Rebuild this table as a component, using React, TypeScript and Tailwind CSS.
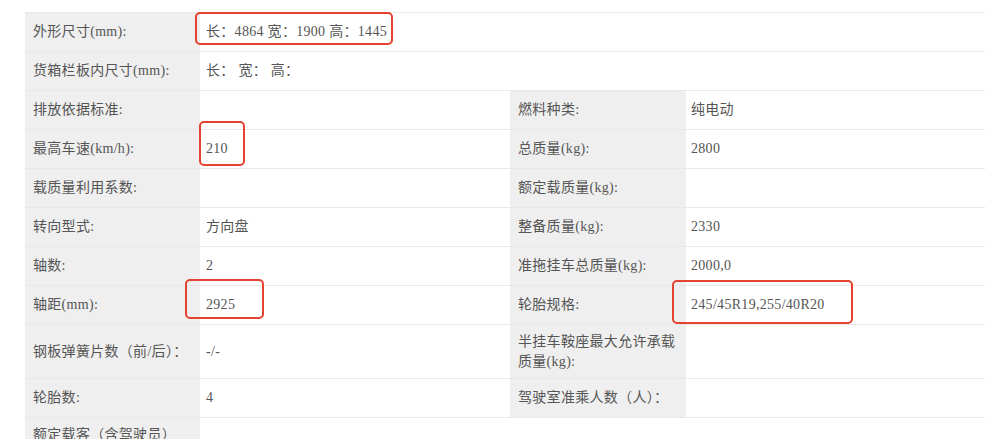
import type { ReactNode } from "react";

type Row = {
  id: string;
  label: ReactNode;
  value?: string;
  label2?: string;
  value2?: string;
  span?: boolean;
  tall?: boolean;
};

const rows: Row[] = [
  { id: "size", label: "外形尺寸(mm):", value: "长：4864 宽：1900 高：1445", span: true },
  { id: "box", label: "货箱栏板内尺寸(mm):", value: "长：  宽：  高：", span: true },
  { id: "emission", label: "排放依据标准:", value: "", label2: "燃料种类:", value2: "纯电动" },
  { id: "speed", label: "最高车速(km/h):", value: "210", label2: "总质量(kg):", value2: "2800" },
  { id: "ratio", label: "载质量利用系数:", value: "", label2: "额定载质量(kg):", value2: "" },
  { id: "steer", label: "转向型式:", value: "方向盘", label2: "整备质量(kg):", value2: "2330" },
  { id: "axles", label: "轴数:", value: "2", label2: "准拖挂车总质量(kg):", value2: "2000,0" },
  { id: "base", label: "轴距(mm):", value: "2925", label2: "轮胎规格:", value2: "245/45R19,255/40R20" },
  { id: "spring", label: "钢板弹簧片数（前/后）：", value: "-/-", label2: "半挂车鞍座最大允许承载质量(kg):", value2: "", tall: true },
  { id: "tires", label: "轮胎数:", value: "4", label2: "驾驶室准乘人数（人）：", value2: "" },
  {
    id: "seats",
    label: (
      <>
        额定载客（含驾驶员）
        <br />
        (人):
      </>
    ),
    value: "5",
    span: true,
    tall: true,
  },
];

const marks = [
  "left-[195px] top-[12px] w-[198px] h-[33px]",
  "left-[199px] top-[121px] w-[46px] h-[45px]",
  "left-[185px] top-[279px] w-[79px] h-[40px]",
  "left-[672px] top-[280px] w-[181px] h-[44px]",
];

export default function App() {
  return (
    <div
      className="relative h-[439px] w-[985px] overflow-hidden bg-white pl-[25px] pt-[12px] text-[14px] leading-[20px] text-[#555]"
      style={{ fontFamily: '"Liberation Serif", "Noto Sans CJK SC", serif' }}
    >
      <table className="w-[960px] table-fixed border-collapse border-t border-[#e8e8e8]">
        <colgroup>
          <col className="w-[175px]" />
          <col className="w-[310px]" />
          <col className="w-[176px]" />
          <col />
        </colgroup>
        <tbody>
          {rows.map((row) => (
            <tr key={row.id} className={`border-b border-[#e8e8e8] ${row.tall ? "h-[54px]" : "h-[39px]"}`}>
              <td className="bg-[#efefef] px-2 align-middle tracking-[0.3px]">{row.label}</td>
              {row.span ? (
                <td colSpan={3} className="px-[6px] align-middle tracking-[0.3px]">
                  {row.value}
                </td>
              ) : (
                <>
                  <td className="px-[6px] align-middle tracking-[0.3px]">{row.value}</td>
                  <td className="bg-[#efefef] px-2 align-middle tracking-[0.3px]">{row.label2}</td>
                  <td className="px-[5px] align-middle tracking-[0.3px]">{row.value2}</td>
                </>
              )}
            </tr>
          ))}
        </tbody>
      </table>
      {marks.map((m) => (
        <div key={m} className={`absolute rounded-[5px] border-2 border-[#e5432f] ${m}`} />
      ))}
    </div>
  );
}
